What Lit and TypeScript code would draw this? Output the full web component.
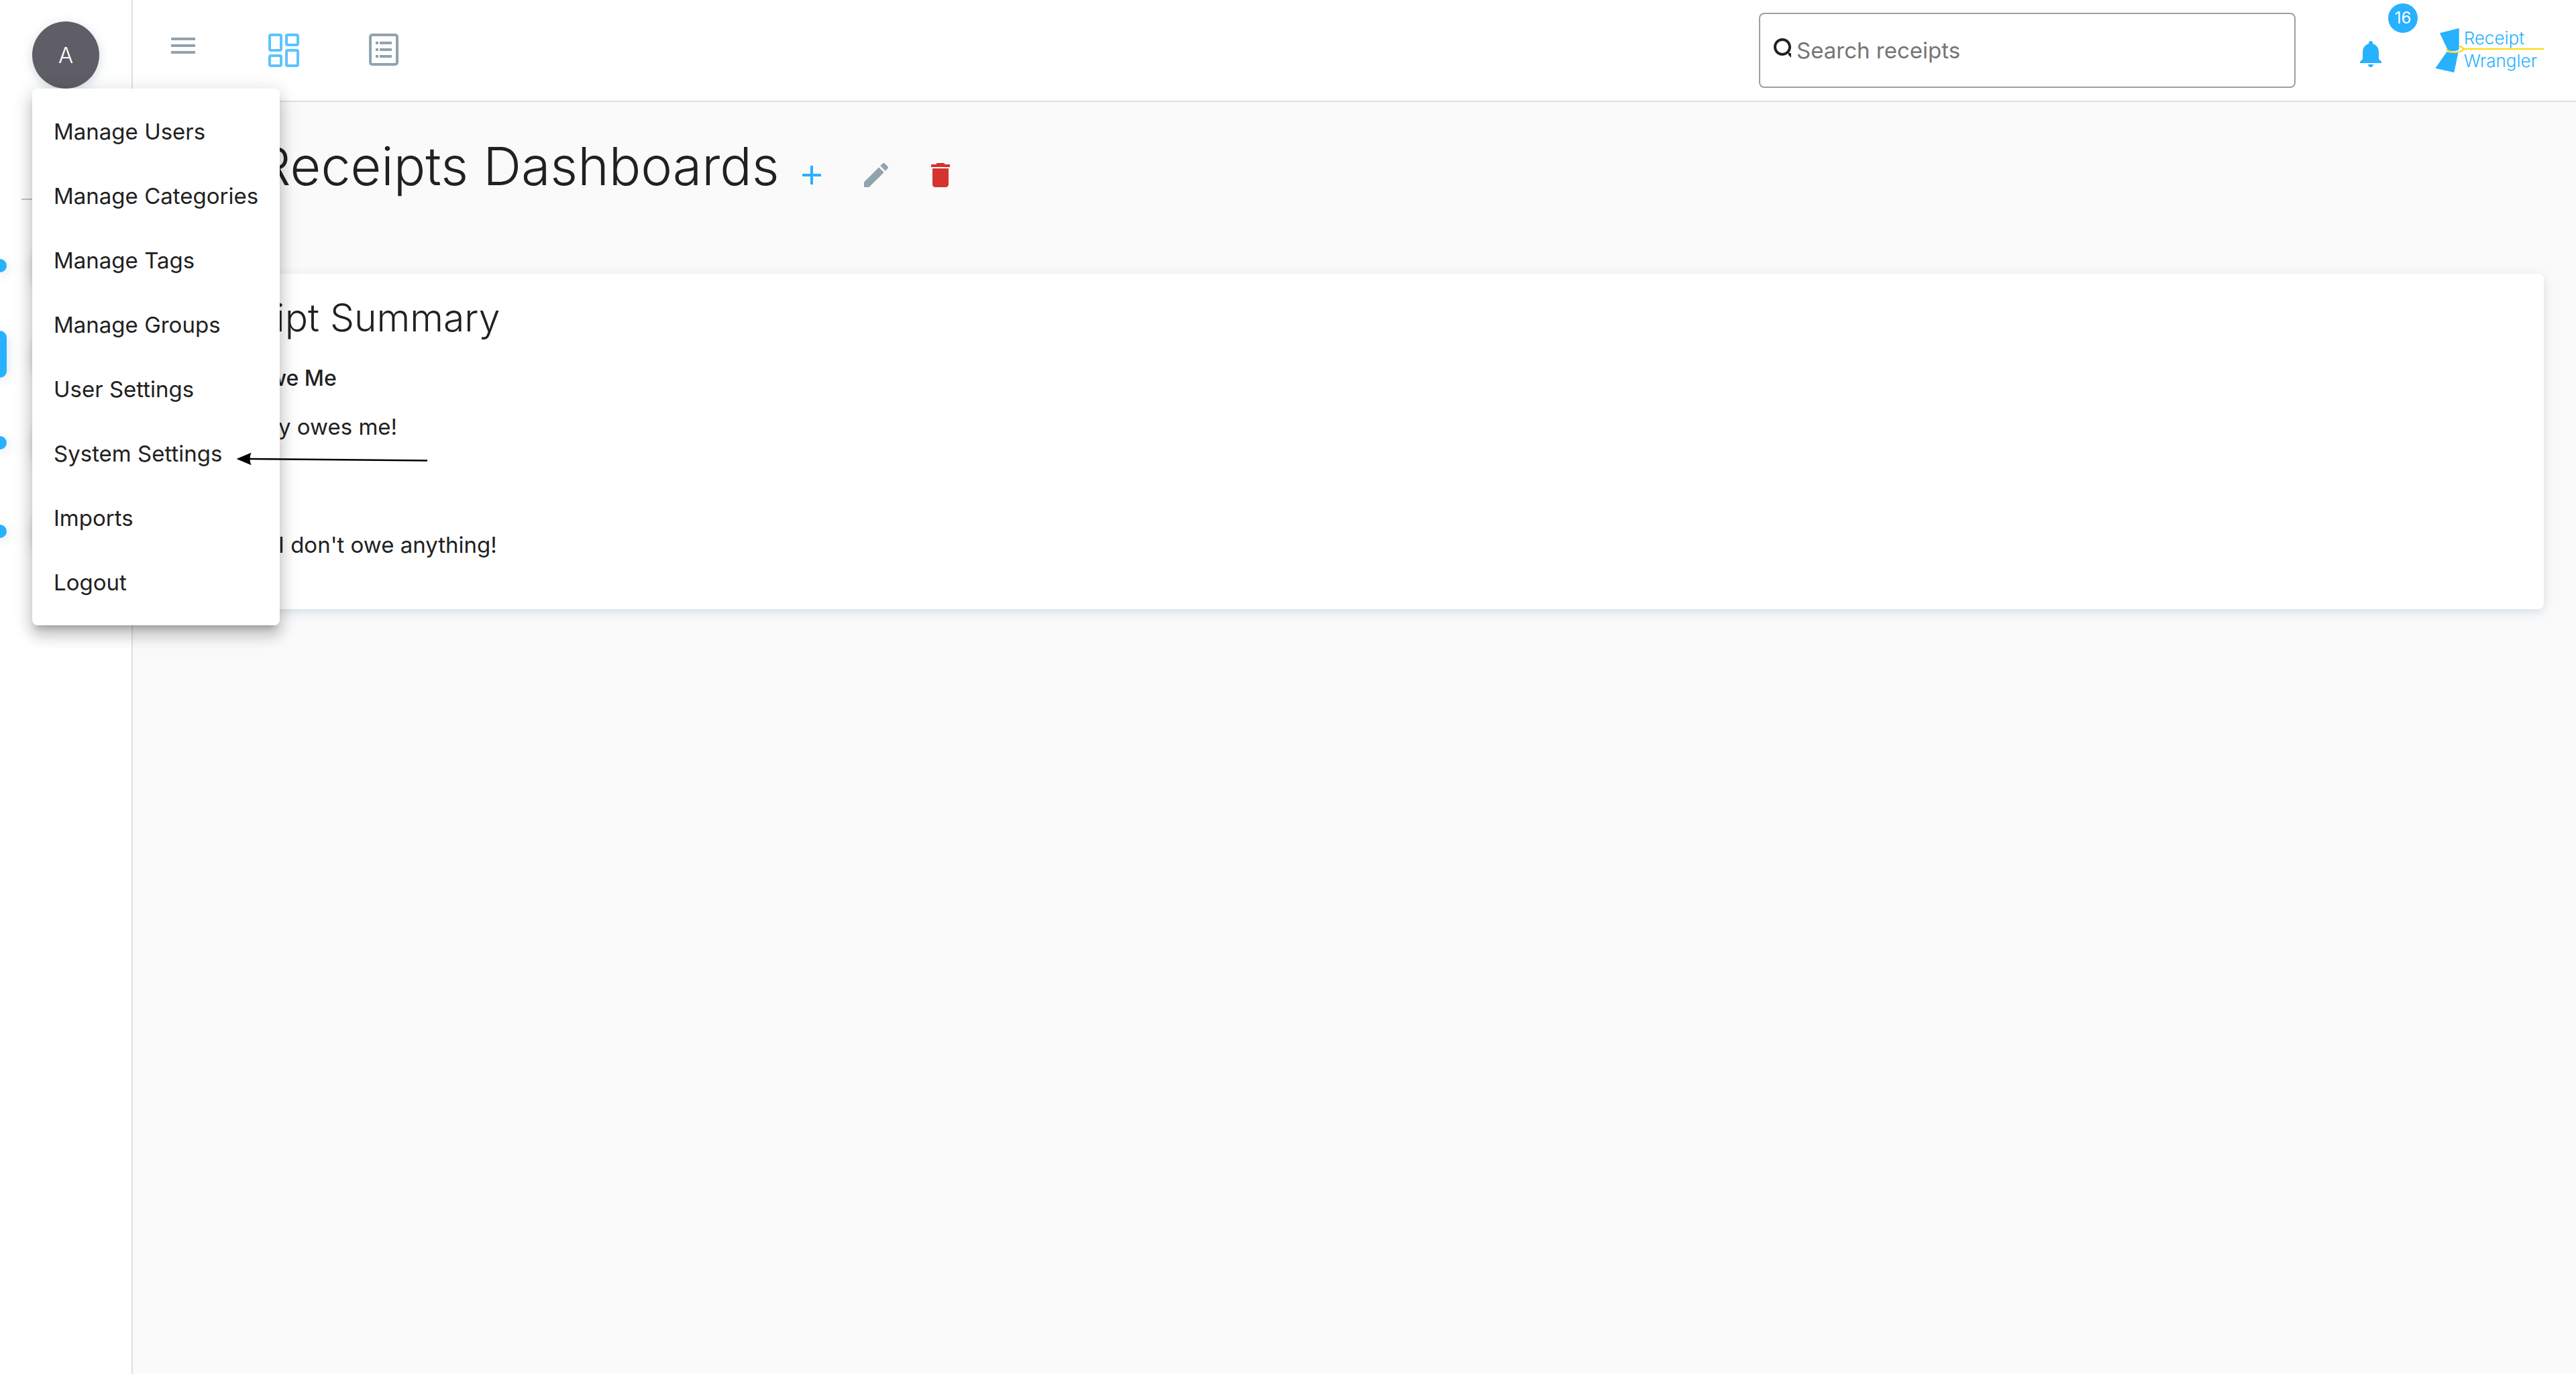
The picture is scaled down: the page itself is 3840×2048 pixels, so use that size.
import { LitElement, html, css, svg } from "lit";
import { customElement, property } from "lit/decorators.js";

const base = css`
  :host,
  * {
    box-sizing: border-box;
  }
  button {
    border: 0;
    padding: 0;
    margin: 0;
    background: none;
    font: inherit;
    color: inherit;
    cursor: pointer;
  }
  svg {
    display: block;
  }
`;

const icons = {
  menu: svg`<path d="M6 5h36v4H6zM6 15h36v4H6zM6 25h36v4H6z" />`,
  dashboard: svg`<g fill="none" stroke="currentColor" stroke-width="4">
    <rect x="3" y="1" width="17" height="23" rx="2" />
    <rect x="28" y="1" width="17" height="15" rx="2" />
    <rect x="28" y="24" width="17" height="23" rx="2" />
    <rect x="3" y="32" width="17" height="15" rx="2" />
  </g>`,
  list: svg`<rect x="3" y="1" width="40" height="44" rx="3" fill="none" stroke="currentColor" stroke-width="4" />
    <path d="M11 11h4v4h-4zM17 11h18v4H17zM11 21h4v4h-4zM17 21h18v4H17zM11 31h4v4h-4zM17 31h18v4H17z" />`,
  add: svg`<path transform="scale(2)" d="M19 13h-6v6h-2v-6H5v-2h6V5h2v6h6v2z" />`,
  edit: svg`<path transform="scale(2)" d="M3 17.25V21h3.75L17.81 9.94l-3.75-3.75L3 17.25zM20.71 7.04c.39-.39.39-1.02 0-1.41l-2.34-2.34c-.39-.39-1.02-.39-1.41 0l-1.83 1.83 3.75 3.75 1.83-1.83z" />`,
  delete: svg`<path transform="scale(2)" d="M6 19c0 1.1.9 2 2 2h8c1.1 0 2-.9 2-2V7H6v12zM19 4h-3.5l-1-1h-5l-1 1H5v2h14V4z" />`,
  bell: svg`<path transform="scale(2)" d="M12 22c1.1 0 2-.9 2-2h-4c0 1.1.89 2 2 2zm6-6v-5c0-3.07-1.64-5.64-4.5-6.32V4c0-.83-.67-1.5-1.5-1.5s-1.5.67-1.5 1.5v.68C7.63 5.36 6 7.92 6 11v5l-2 2v1h16v-1l-2-2z" />`,
};

type IconName = keyof typeof icons;

@customElement("rw-icon")
export class RwIcon extends LitElement {
  static styles = css`
    :host {
      display: inline-block;
      width: 48px;
      height: 48px;
    }
    .glyph {
      display: block;
      width: 100%;
      height: 100%;
      fill: currentColor;
      overflow: visible;
    }
  `;
  @property() name: IconName = "menu";
  render() {
    return html`<svg class="glyph" viewBox="0 0 48 48" aria-hidden="true">${icons[this.name]}</svg>`;
  }
}

@customElement("rw-logo")
export class RwLogo extends LitElement {
  static styles = css`
    :host {
      display: block;
    }
    .logo {
      display: block;
      width: 162px;
      height: 70px;
    }
    .word {
      font: 300 78px Inter, "Open Sans", sans-serif;
    }
  `;
  render() {
    return html`<svg class="logo" viewBox="30 30 486 210" role="img" aria-label="Receipt Wrangler">
      <g fill="#27b1ff">
        <path d="M51 58L137 36V128Q136 138 112 138Q88 138 84 128Z" />
        <path d="M82 142Q106 150 134 142L115 234L31 215Z" />
        <text class="word" x="158" y="108">Receipt</text>
        <text class="word" x="158" y="210">Wrangler</text>
      </g>
      <path
        d="M82 128C82 150 155 150 155 129C155 124 148 119 138 118"
        fill="none"
        stroke="#ffd600"
        stroke-width="6"
      />
      <path d="M154 126H516V132H154Z" fill="#ffd600" />
    </svg>`;
  }
}

@customElement("rw-sidebar")
export class RwSidebar extends LitElement {
  static styles = [
    base,
    css`
      :host {
        display: block;
        flex: 0 0 198px;
        position: relative;
        padding-top: 32px;
        background: #fff;
        border-right: 2px solid #e0e0e0;
      }
      .avatar {
        display: block;
        width: 100px;
        height: 100px;
        border-radius: 50%;
        background: #5f5d66;
        color: #fff;
        font-weight: 300;
        box-shadow: 0 4px 16px rgba(84, 122, 145, 0.28);
      }
      .user {
        margin-left: 48px;
      }
      .divider {
        height: 2px;
        margin: 164px 32px 48px;
        border: 0;
        background: #c6c6c6;
      }
      .groups {
        display: flex;
        flex-direction: column;
        gap: 32px;
      }
      .group {
        display: flex;
        align-items: center;
        gap: 38px;
      }
      .marker {
        width: 10px;
        height: 20px;
        border-radius: 0 10px 10px 0;
        background: #27b1ff;
        box-shadow: 0 4px 16px rgba(84, 122, 145, 0.28);
      }
      .marker.active {
        height: 70px;
      }
      .menu {
        position: absolute;
        z-index: 2;
        left: 48px;
        top: 132px;
        display: flex;
        flex-direction: column;
        padding: 16px 0;
        border-radius: 8px;
        background: #fff;
        box-shadow: 0 10px 10px -6px rgba(0, 0, 0, 0.2),
          0 16px 20px 2px rgba(0, 0, 0, 0.14),
          0 6px 28px 4px rgba(0, 0, 0, 0.12);
      }
      .item {
        height: 96px;
        padding: 0 32px;
        text-align: left;
        white-space: nowrap;
      }
      .pointer {
        position: absolute;
        z-index: 3;
        left: 352px;
        top: 672px;
        width: 288px;
        height: 24px;
      }
    `,
  ];
  private items = [
    "Manage Users",
    "Manage Categories",
    "Manage Tags",
    "Manage Groups",
    "User Settings",
    "System Settings",
    "Imports",
    "Logout",
  ];
  private groups = [false, true, false, false];
  render() {
    return html`
      <button class="avatar user" aria-haspopup="menu" aria-expanded="true">A</button>
      <hr class="divider" />
      <div class="groups">
        ${this.groups.map(
          (active, i) => html`<div class="group">
            <span class="marker ${active ? "active" : ""}"></span>
            <button class="avatar" aria-label="Group ${i + 1}"></button>
          </div>`
        )}
      </div>
      <div class="menu" role="menu">
        ${this.items.map((t) => html`<button class="item" role="menuitem">${t}</button>`)}
      </div>
      <svg class="pointer" viewBox="0 0 288 24" aria-hidden="true">
        <path d="M20 12L285 14.5" stroke="#000" stroke-width="2.4" />
        <path d="M0.5 12L22.5 2.7Q18.5 12 22.5 21.3Z" />
      </svg>
    `;
  }
}

@customElement("rw-header")
export class RwHeader extends LitElement {
  static styles = [
    base,
    css`
      :host {
        display: flex;
        align-items: center;
        min-height: 152px;
        padding: 0 48px 0 24px;
        background: #fff;
        border-bottom: 2px solid #e0e0e0;
      }
      .nav {
        display: flex;
        gap: 48px;
        color: #90a3ae;
      }
      .tab {
        display: grid;
        place-items: center;
        width: 102px;
        height: 96px;
      }
      .tab.active {
        color: #5cc4ff;
      }
      .search {
        display: flex;
        align-items: center;
        flex: 0 1 800px;
        height: 112px;
        margin: 0 64px 0 auto;
        padding-left: 14px;
        border: 2px solid #9e9e9e;
        border-radius: 8px;
      }
      .lens {
        flex: none;
        width: 32px;
        height: 48px;
        fill: #212121;
      }
      .field {
        flex: 1;
        min-width: 0;
        height: 100%;
        padding: 0 8px;
        border: 0;
        outline: 0;
        background: none;
        font: inherit;
        color: #212121;
      }
      .field::placeholder {
        color: #757575;
        opacity: 1;
      }
      .bell {
        position: relative;
        display: grid;
        place-items: center;
        width: 96px;
        height: 96px;
        margin-right: 48px;
        padding-top: 10px;
        color: #27b1ff;
      }
      .badge {
        position: absolute;
        left: 74px;
        top: -22px;
        width: 44px;
        height: 44px;
        border-radius: 50%;
        background: #27b1ff;
        color: #fff;
        font-size: 24px;
        line-height: 44px;
        text-align: center;
      }
    `,
  ];
  render() {
    return html`
      <nav class="nav">
        <button class="tab" aria-label="Toggle sidebar"><rw-icon name="menu"></rw-icon></button>
        <button class="tab active" aria-label="Dashboards"><rw-icon name="dashboard"></rw-icon></button>
        <button class="tab" aria-label="Receipts"><rw-icon name="list"></rw-icon></button>
      </nav>
      <label class="search">
        <svg class="lens" viewBox="0 0 16 24" aria-hidden="true">
          <path
            d="M15.5 14h-.79l-.28-.27C15.41 12.59 16 11.11 16 9.5 16 5.91 13.09 3 9.5 3S3 5.91 3 9.5 5.91 16 9.5 16c1.61 0 3.09-.59 4.23-1.57l.27.28v.79l5 4.99L20.49 19l-4.99-5zm-6 0C7.01 14 5 11.99 5 9.5S7.01 5 9.5 5 14 7.01 14 9.5 11.99 14 9.5 14z"
          />
        </svg>
        <input class="field" type="text" placeholder="Search receipts" aria-label="Search receipts" />
      </label>
      <button class="bell" aria-label="Notifications">
        <rw-icon name="bell"></rw-icon>
        <span class="badge">16</span>
      </button>
      <rw-logo></rw-logo>
    `;
  }
}

@customElement("rw-dashboard")
export class RwDashboard extends LitElement {
  static styles = [
    base,
    css`
      :host {
        display: block;
        padding: 48px;
      }
      .head {
        display: flex;
        align-items: flex-start;
      }
      .title {
        margin: 0;
        font-size: 79px;
        font-weight: 300;
        line-height: 94px;
      }
      .actions {
        display: flex;
        padding-top: 13px;
      }
      .action {
        display: grid;
        place-items: center;
        width: 96px;
        height: 96px;
      }
      .add {
        color: #27b1ff;
      }
      .edit {
        color: #90a3ae;
      }
      .delete {
        color: #d63230;
      }
      .card {
        margin-top: 99px;
        padding: 32px 32px 72px;
        border-radius: 8px;
        background: #fff;
        box-shadow: 0 4px 16px rgba(84, 122, 145, 0.22);
      }
      .name {
        margin: 0 0 32px;
        font-size: 57px;
        font-weight: 300;
        line-height: 68px;
      }
      .label {
        margin: 0 0 24px;
        font-size: 32px;
        font-weight: 500;
        line-height: 48px;
      }
      .text {
        margin: 0;
        padding-left: 32px;
        line-height: 48px;
      }
      .text + .label {
        margin-top: 56px;
      }
    `,
  ];
  render() {
    return html`
      <div class="head">
        <h1 class="title">My Receipts Dashboards</h1>
        <div class="actions">
          <button class="action add" aria-label="Add dashboard"><rw-icon name="add"></rw-icon></button>
          <button class="action edit" aria-label="Edit dashboard"><rw-icon name="edit"></rw-icon></button>
          <button class="action delete" aria-label="Delete dashboard"><rw-icon name="delete"></rw-icon></button>
        </div>
      </div>
      <section class="card">
        <h2 class="name">Receipt Summary</h2>
        <h3 class="label">Users Owe Me</h3>
        <p class="text">Nobody owes me!</p>
        <h3 class="label">I Owe</h3>
        <p class="text">Phew! I don't owe anything!</p>
      </section>
    `;
  }
}

@customElement("app-root")
export class AppRoot extends LitElement {
  static styles = css`
    :host {
      display: flex;
      min-height: 100vh;
      background: #fafafa;
      color: #212121;
      font: 400 33px Inter, "Open Sans", sans-serif;
    }
    .main {
      flex: 1;
      min-width: 0;
    }
  `;
  render() {
    return html`
      <rw-sidebar></rw-sidebar>
      <main class="main">
        <rw-header></rw-header>
        <rw-dashboard></rw-dashboard>
      </main>
    `;
  }
}
